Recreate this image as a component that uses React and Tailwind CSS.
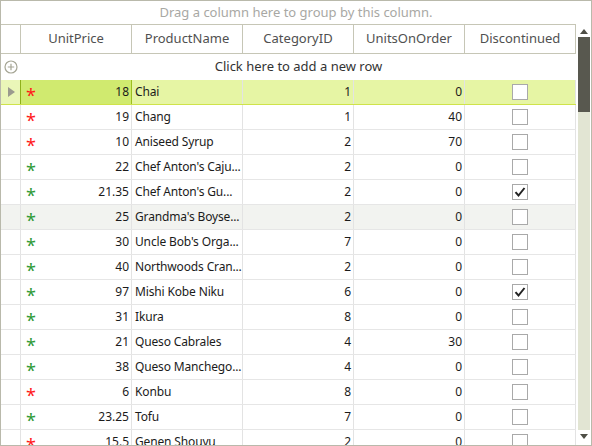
import React from 'react';

const rows = [
  { price: '18', name: 'Chai', cat: 1, units: 0, disc: false, red: true },
  { price: '19', name: 'Chang', cat: 1, units: 40, disc: false, red: true },
  { price: '10', name: 'Aniseed Syrup', cat: 2, units: 70, disc: false, red: true },
  { price: '22', name: "Chef Anton's Caju...", cat: 2, units: 0, disc: false },
  { price: '21.35', name: "Chef Anton's Gu...", cat: 2, units: 0, disc: true },
  { price: '25', name: "Grandma's Boyse...", cat: 2, units: 0, disc: false, hover: true },
  { price: '30', name: "Uncle Bob's Orga...", cat: 7, units: 0, disc: false },
  { price: '40', name: 'Northwoods Cran...', cat: 2, units: 0, disc: false },
  { price: '97', name: 'Mishi Kobe Niku', cat: 6, units: 0, disc: true },
  { price: '31', name: 'Ikura', cat: 8, units: 0, disc: false },
  { price: '21', name: 'Queso Cabrales', cat: 4, units: 30, disc: false },
  { price: '38', name: 'Queso Manchego...', cat: 4, units: 0, disc: false },
  { price: '6', name: 'Konbu', cat: 8, units: 0, disc: false, red: true },
  { price: '23.25', name: 'Tofu', cat: 7, units: 0, disc: false },
  { price: '15.5', name: 'Genen Shouyu', cat: 2, units: 0, disc: false, red: true },
];

const headers = ['UnitPrice', 'ProductName', 'CategoryID', 'UnitsOnOrder', 'Discontinued'];

function Checkbox({ checked }) {
  return (
    <div className="w-[16px] h-[16px] border border-[#a9a9a9] bg-white flex items-center justify-center">
      {checked && (
        <svg width="12" height="12" viewBox="0 0 12 12">
          <path d="M1.5 6.2 L4.5 9.5 L10.5 2" fill="none" stroke="#222" strokeWidth="2" />
        </svg>
      )}
    </div>
  );
}

function Row({ r, selected }) {
  const bg = selected ? 'bg-[#e6f5a4] border-[#cfe34a]' : r.hover ? 'bg-[#f2f3f0] border-[#e6e6e6]' : 'bg-white border-[#e6e6e6]';
  return (
    <div className={`grid grid-cols-[20px_111px_111px_111px_111px_111px] h-[25px] shrink-0 border-b ${bg}`}>
      <div className={`flex items-center pl-[7px] border-r border-[#e3e3e3] ${selected ? 'bg-[#eaf6b8]' : ''}`}>
        {selected && (
          <svg width="7" height="10" viewBox="0 0 7 10">
            <path d="M0 0 L7 5 L0 10 Z" fill="#9a9a8e" />
          </svg>
        )}
      </div>
      <div className={`flex items-center justify-between pl-[5px] pr-[2px] border-r ${selected ? 'bg-[#d0ea6f] border-[#9dbf1f] border-l border-l-[#8fb01a] -ml-px' : 'border-[#e3e3e3]'}`}>
        <span className={`text-[18px] leading-none mt-[5px] ${r.red ? 'text-[#ff1a1a]' : 'text-[#2f9a36]'}`}>*</span>
        <span>{r.price}</span>
      </div>
      <div className="flex items-center pl-[3px] border-r border-[#e3e3e3] whitespace-nowrap overflow-hidden tracking-[-0.15px]">{r.name}</div>
      <div className="flex items-center justify-end pr-[2px] border-r border-[#e3e3e3]">{r.cat}</div>
      <div className="flex items-center justify-end pr-[2px] border-r border-[#e3e3e3]">{r.units}</div>
      <div className="flex items-center justify-center border-r border-[#e3e3e3]">
        <Checkbox checked={r.disc} />
      </div>
    </div>
  );
}

export default function App() {
  return (
    <div
      className="w-[592px] h-[446px] border border-[#b9b9ab] bg-white flex flex-col overflow-hidden text-[12px] text-[#1b1b1b]"
      style={{ fontFamily: '"Noto Sans", "Open Sans", sans-serif' }}
    >
      {/* group panel */}
      <div className="h-[23px] shrink-0 flex items-center justify-center text-[13px] text-[#a8a8a4]">
        Drag a column here to group by this column.
      </div>

      <div className="flex flex-1 min-h-0">
        <div className="w-[575px] flex flex-col min-h-0">
          {/* header */}
          <div className="grid grid-cols-[20px_111px_111px_111px_111px_111px] h-[30px] shrink-0 border-y border-[#c6c6b6]">
            <div className="border-r border-[#c6c6b6]" />
            {headers.map(h => (
              <div key={h} className="flex items-center justify-center border-r border-[#c6c6b6] text-[13px] text-[#505050]">
                {h}
              </div>
            ))}
          </div>

          {/* new row */}
          <div className="h-[26px] shrink-0 flex items-center relative">
            <svg className="absolute left-[3px] top-[6px]" width="14" height="14" viewBox="0 0 14 14">
              <circle cx="7" cy="7" r="6" fill="none" stroke="#a5a594" strokeWidth="1.2" />
              <path d="M7 3.8 V10.2 M3.8 7 H10.2" stroke="#a5a594" strokeWidth="1.2" />
            </svg>
            <div className="flex-1 text-center text-[13px] text-[#333] pl-[20px]">Click here to add a new row</div>
          </div>

          {/* rows */}
          <div className="flex flex-col overflow-hidden">
            {rows.map((r, i) => (
              <Row key={i} r={r} selected={i === 0} />
            ))}
          </div>
        </div>

        {/* scrollbar */}
        <div className="w-[15px] flex flex-col items-center bg-white pt-[4px] pb-[4px]">
          <svg width="8" height="5" viewBox="0 0 8 5" className="shrink-0 mt-[1px]">
            <path d="M0 5 L4 0 L8 5 Z" fill="#4e4e46" />
          </svg>
          <div className="w-[12px] flex-1 flex flex-col mt-[3px] mb-[4px] ml-px">
            <div className="h-[75px] bg-[#58584f]" />
            <div className="flex-1 bg-[#e2e5d3]" />
          </div>
          <svg width="8" height="5" viewBox="0 0 8 5" className="shrink-0 mb-[2px]">
            <path d="M0 0 L8 0 L4 5 Z" fill="#4e4e46" />
          </svg>
        </div>
      </div>
    </div>
  );
}
